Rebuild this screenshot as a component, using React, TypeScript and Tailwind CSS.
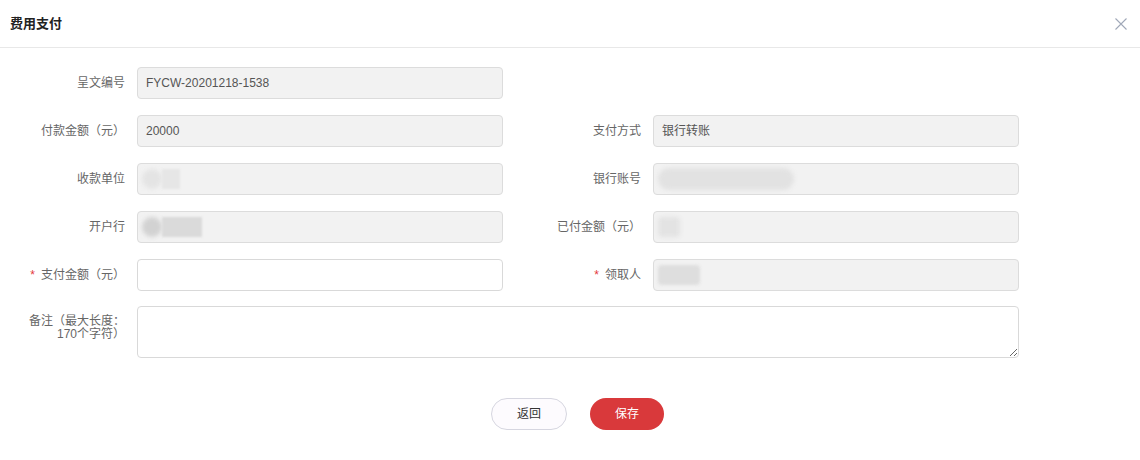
import React from 'react';

const font = { fontFamily: '"Liberation Sans", "Noto Sans CJK SC", sans-serif' };

interface FieldProps {
  label: string;
  required?: boolean;
  value?: React.ReactNode;
  editable?: boolean;
}

const Field: React.FC<FieldProps> = ({ label, required, value, editable }) => (
  <div className="flex items-center">
    <div className="w-[125px] shrink-0 text-right text-[12px] text-[#666]">
      {required && <span className="mr-[6px] text-[#e4393c]">*</span>}
      {label}
    </div>
    <div
      className={`ml-3 flex h-8 w-[366px] items-center overflow-hidden rounded border px-2 text-[12px] text-[#555] ${
        editable ? 'border-[#d9d9d9] bg-white' : 'border-[#dcdcdc] bg-[#f2f2f2]'
      }`}
    >
      {value}
    </div>
  </div>
);

// blurred blocks standing in for redacted values
const Blur: React.FC<{ w: string; tone: string }> = ({ w, tone }) => (
  <div className={`h-[20px] ${w} ${tone} rounded-full blur-[2px]`} />
);

export default function App() {
  return (
    <div className="h-[460px] w-[1140px] bg-white" style={font}>
      <div className="flex h-[48px] items-center justify-between border-b border-[#e8e8e8] pl-[10px] pr-[12px]">
        <h2 className="text-[13px] font-bold text-[#222]">费用支付</h2>
        <svg width="14" height="14" viewBox="0 0 14 14" className="text-[#a0a8b8]">
          <path d="M1.5 1.5 L12.5 12.5 M12.5 1.5 L1.5 12.5" stroke="currentColor" strokeWidth="1.1" />
        </svg>
      </div>

      <div className="pt-[19px]">
        <div className="grid w-[1019px] grid-cols-[503px_503px] gap-x-[13px] gap-y-4">
          <Field label="呈文编号" value="FYCW-20201218-1538" />
          <div />
          <Field label="付款金额（元）" value="20000" />
          <Field label="支付方式" value="银行转账" />
          <Field
            label="收款单位"
            value={<div className="-ml-1 flex"><Blur w="w-[20px]" tone="bg-[#e4e4e4]" /><div className="h-[20px] w-[18px] bg-[#e6e6e6] blur-[1px]" /></div>}
          />
          <Field
            label="银行账号"
            value={<div className="-ml-1 h-[22px] w-[136px] rounded-full bg-[#e2e2e2] blur-[2px]" />}
          />
          <Field
            label="开户行"
            value={<div className="-ml-1 flex"><Blur w="w-[20px]" tone="bg-[#d2d2d2]" /><div className="h-[20px] w-[40px] bg-[#dadada] blur-[1px]" /></div>}
          />
          <Field
            label="已付金额（元）"
            value={<div className="-ml-1 h-[20px] w-[22px] rounded bg-[#e3e3e3] blur-[2px]" />}
          />
          <Field label="支付金额（元）" required editable />
          <Field
            label="领取人"
            required
            value={<div className="-ml-1 h-[20px] w-[42px] rounded bg-[#dedede] blur-[1.5px]" />}
          />
        </div>

        <div className="mt-[15px] flex">
          <div className="w-[125px] shrink-0 pl-[26px] pt-[9px] text-right text-[12px] leading-[13px] text-[#666]">
            备注（最大长度：170个字符）
          </div>
          <textarea className="ml-3 h-[52px] w-[882px] rounded border border-[#d9d9d9] bg-white px-2 py-1 text-[12px] outline-none" />
        </div>

        <div className="mt-[40px] flex justify-center gap-[23px] pl-[15px]">
          <button className="h-8 w-[76px] rounded-full border border-[#d6d6e0] bg-[#fdfbfe] text-[12px] text-[#333]">
            返回
          </button>
          <button className="h-8 w-[74px] rounded-full bg-[#d9393b] text-[12px] text-white">
            保存
          </button>
        </div>
      </div>
    </div>
  );
}
